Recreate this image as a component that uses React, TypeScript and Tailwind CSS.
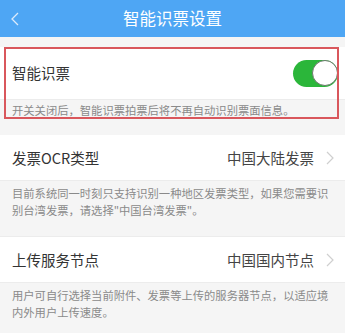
const font = { fontFamily: '"Noto Sans CJK SC", "Noto Sans", sans-serif' };

function Chevron() {
  return (
    <svg width="8" height="14" viewBox="0 0 8 14" className="ml-[12px]">
      <polyline points="1,1 7,7 1,13" fill="none" stroke="#cfcfcf" strokeWidth="1.2" />
    </svg>
  );
}

function SelectRow({ label, value }: { label: string; value: string }) {
  return (
    <div className="flex h-[46px] items-center justify-between border-b border-[#ececec] bg-white pl-[12px] pr-[11px]">
      <span className="text-[14.5px] text-[#333]">{label}</span>
      <div className="flex items-center">
        <span className="text-[14.5px] text-[#444]">{value}</span>
        <Chevron />
      </div>
    </div>
  );
}

export default function App() {
  return (
    <div className="h-[333px] w-[345px] overflow-hidden bg-[#f5f5f5]" style={font}>
      <header className="relative flex h-[37px] items-center justify-center bg-[#4ea6f4]">
        <svg width="8" height="14" viewBox="0 0 8 14" className="absolute left-[11px] top-[12px]">
          <polyline points="7,1 1,7 7,13" fill="none" stroke="#dcebfb" strokeWidth="1.3" />
        </svg>
        <h1 className="text-[16.5px] text-white">智能识票设置</h1>
      </header>

      <section className="relative mt-[10px]">
        <div className="flex h-[53px] items-center justify-between border-b border-[#ececec] bg-white pl-[12px] pr-[7px]">
          <span className="text-[14.5px] text-[#333]">智能识票</span>
          <div className="flex h-[27px] w-[45px] items-center justify-end rounded-full bg-[#2bb63a]">
            <div className="h-[26px] w-[26px] rounded-full border border-[#6b7a6b] bg-white" />
          </div>
        </div>
        <p className="h-[20px] px-[12px] pt-[1px] text-[11.3px] leading-[18px] text-[#8a8a8a]">
          开关关闭后，智能识票拍票后将不再自动识别票面信息。
        </p>
        <div className="absolute left-[4px] top-0 h-[72px] w-[335px] border-2 border-[#d9575c]" />
      </section>

      <section className="mt-[15px]">
        <SelectRow label="发票OCR类型" value="中国大陆发票" />
        <p className="h-[55px] px-[12px] pt-[4px] text-[11.3px] leading-[17px] text-[#8a8a8a]">
          目前系统同一时刻只支持识别一种地区发票类型，如果您需要识别台湾发票，请选择"中国台湾发票"。
        </p>
      </section>

      <section className="border-t border-[#ececec]">
        <SelectRow label="上传服务节点" value="中国国内节点" />
        <p className="px-[12px] pt-[4px] text-[11.3px] leading-[17px] text-[#8a8a8a]">
          用户可自行选择当前附件、发票等上传的服务器节点，以适应境内外用户上传速度。
        </p>
      </section>
    </div>
  );
}
